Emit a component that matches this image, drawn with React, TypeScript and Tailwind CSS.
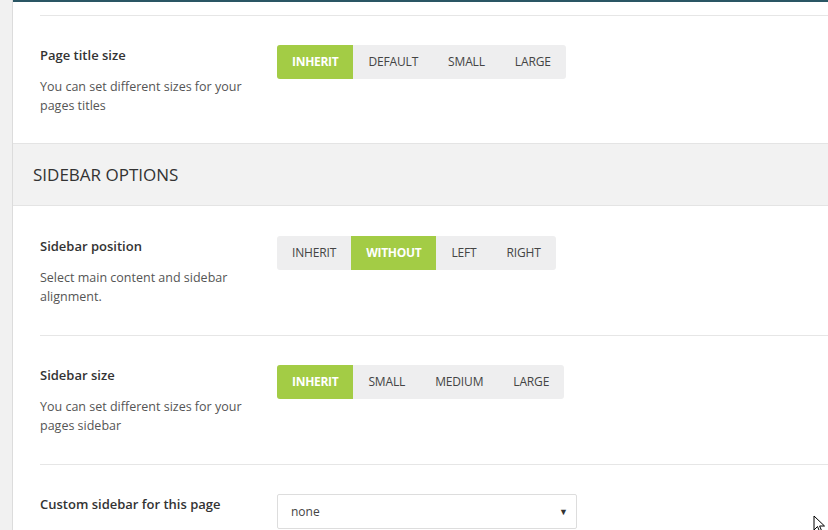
import React from "react";

const font = { fontFamily: '"Open Sans", "Noto Sans", sans-serif' };

function Group({ items, active }: { items: string[]; active: number }) {
  return (
    <div className="flex h-[34px] rounded-[3px] bg-[#eeeeef] overflow-hidden">
      {items.map((it, i) => (
        <div
          key={it}
          className={
            i === active
              ? "flex items-center px-[15px] bg-[#a3cc45] text-white font-bold text-[12px] tracking-[-0.3px]"
              : "flex items-center px-[15px] text-[#444] text-[12px] tracking-[-0.15px]"
          }
        >
          {it}
        </div>
      ))}
    </div>
  );
}

function Row({
  title,
  desc,
  children,
  className,
}: {
  title: string;
  desc?: string;
  children: React.ReactNode;
  className: string;
}) {
  return (
    <div className={"ml-[27px] flex " + className}>
      <div className="w-[237px] shrink-0">
        <div className="text-[13px] leading-[20px] font-semibold text-[#333]">{title}</div>
        {desc && (
          <div className="mt-[12px] w-[205px] text-[12.5px] leading-[19px] text-[#555]">{desc}</div>
        )}
      </div>
      <div>{children}</div>
    </div>
  );
}

export default function App() {
  return (
    <div className="relative w-[828px] h-[530px] overflow-hidden bg-[#f1f1f1] flex" style={font}>
      <div className="w-[13px] shrink-0 bg-[#f1f1f1] border-r border-[#dcdcdc]" />
      <div className="flex-1 bg-white flex flex-col">
        <div className="h-[2px] bg-[#2a5664]" />
        <div className="h-[14px] border-b border-[#e6e6e6] ml-[27px]" />
        <Row
          className="pt-[29px] pb-[28px]"
          title="Page title size"
          desc="You can set different sizes for your pages titles"
        >
          <Group items={["INHERIT", "DEFAULT", "SMALL", "LARGE"]} active={0} />
        </Row>
        <div className="h-[63px] shrink-0 bg-[#f2f2f2] border-y border-[#e4e4e4] flex items-center pl-[20px] text-[17px] text-[#333]">
          SIDEBAR OPTIONS
        </div>
        <Row
          className="pt-[30px] pb-[29px] border-b border-[#e6e6e6]"
          title="Sidebar position"
          desc="Select main content and sidebar alignment."
        >
          <Group items={["INHERIT", "WITHOUT", "LEFT", "RIGHT"]} active={1} />
        </Row>
        <Row
          className="pt-[29px] pb-[29px] border-b border-[#e6e6e6]"
          title="Sidebar size"
          desc="You can set different sizes for your pages sidebar"
        >
          <Group items={["INHERIT", "SMALL", "MEDIUM", "LARGE"]} active={0} />
        </Row>
        <Row className="pt-[29px]" title="Custom sidebar for this page">
          <div className="w-[300px] h-[35px] border border-[#dddddd] rounded-[2px] flex items-center justify-between pl-[13px] pr-[8px] text-[12px] text-[#444]">
            <span>none</span>
            <span className="text-[9px] text-[#333]">▼</span>
          </div>
        </Row>
      </div>
      <svg className="absolute left-[813px] top-[515px]" width="14" height="20" viewBox="0 0 14 20">
        <path d="M1 1 L1 15 L4.5 11.5 L7 17.5 L9 16.7 L6.6 11 L11.5 11 Z" fill="white" stroke="black" strokeWidth="1" />
      </svg>
    </div>
  );
}
